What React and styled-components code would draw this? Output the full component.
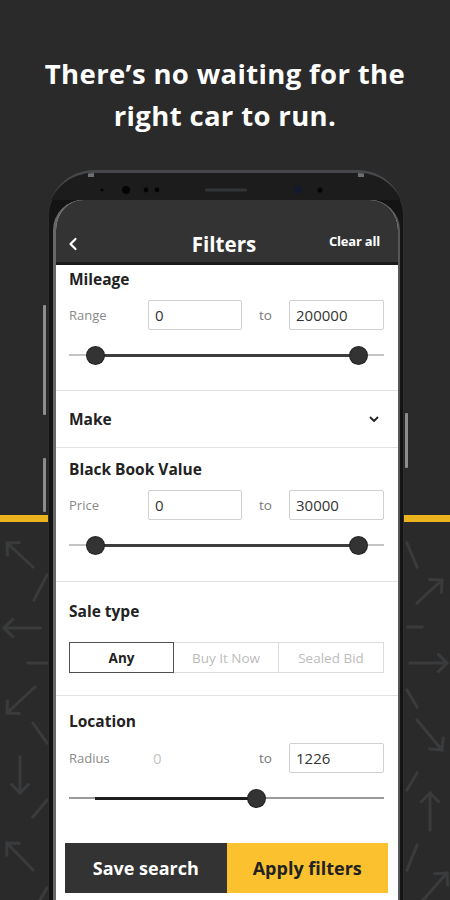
import React from 'react'
import styled, { createGlobalStyle } from 'styled-components'

const GlobalStyle = createGlobalStyle`
  html, body {
    margin: 0;
    padding: 0;
    background: #2a2a2b;
  }
  body {
    font-family: "Open Sans", Lato, "Liberation Sans", sans-serif;
    -webkit-font-smoothing: antialiased;
  }
`

const ARROW_COLOR = '#3a3b3c'

// path for an arrow going from tail to tip
function arrowPath(x1, y1, x2, y2, head = 12) {
    const dx = x2 - x1
    const dy = y2 - y1
    const len = Math.sqrt(dx * dx + dy * dy)
    const ux = -dx / len
    const uy = -dy / len
    const c = Math.cos(Math.PI / 4)
    const s = Math.sin(Math.PI / 4)
    const ax = x2 + head * (ux * c - uy * s)
    const ay = y2 + head * (ux * s + uy * c)
    const bx = x2 + head * (ux * c + uy * s)
    const by = y2 + head * (-ux * s + uy * c)
    return `M${x1} ${y1}L${x2} ${y2}M${ax} ${ay}L${x2} ${y2}L${bx} ${by}`
}

const leftArrows = [
    [33, 397, 7, 373],
    [40, 458, 4, 458],
    [35, 517, 7, 543],
    [20, 587, 20, 623],
    [33, 700, 7, 673],
]
const leftBits = [
    [47, 405, 34, 430],
    [28, 493, 47, 493],
    [33, 553, 47, 573],
    [33, 647, 47, 630],
    [40, 730, 47, 718],
]
const rightArrows = [
    [13, 433, 38, 410],
    [6, 493, 43, 493],
    [13, 550, 38, 580],
    [26, 660, 26, 623],
    [19, 730, 43, 703],
]
const rightBits = [
    [3, 373, 13, 397],
    [4, 457, 18, 457],
    [3, 520, 13, 537],
    [3, 620, 13, 603],
    [3, 700, 13, 675],
]

function SideArt({ arrows, bits, buttons, width }) {
    return (
        <svg width={width} height="730" viewBox={`0 0 ${width} 730`}>
            <g stroke={ARROW_COLOR} strokeWidth="3" fill="none" strokeLinecap="square">
                {arrows.map((a, i) => <path key={i} d={arrowPath(...a)} />)}
                {bits.map((b, i) => <line key={'b' + i} x1={b[0]} y1={b[1]} x2={b[2]} y2={b[3]} />)}
            </g>
            {buttons.map((b, i) => (
                <rect key={'k' + i} x={b[0]} y={b[1]} width="3" height={b[2]} rx="1" fill="#8d8d8f" />
            ))}
        </svg>
    )
}

function RangeSlider({ min, max, low, high, showLow = true, dark }) {
    const a = ((low - min) / (max - min)) * 100
    const b = ((high - min) / (max - min)) * 100
    return (
        <SliderTrack $dark={dark}>
            <Rail>
                <Fill $dark={dark} style={{ left: `${a}%`, width: `${b - a}%` }} />
                {showLow && <Thumb style={{ left: `${a}%` }} />}
                <Thumb style={{ left: `${b}%` }} />
            </Rail>
        </SliderTrack>
    )
}

function App() {
    return (
        <Page>
            <GlobalStyle />
            <Headline>
                There’s no waiting for the
                <br />
                right car to run.
            </Headline>
            <Stage>
                <Side $w={48}>
                    <SideArt width={48} arrows={leftArrows} bits={leftBits} buttons={[[43, 135, 110], [43, 288, 54]]} />
                </Side>
                <Phone>
                    <Bezel>
                        <svg width="356" height="27" viewBox="0 0 356 27">
                            <rect x="40" y="0" width="6" height="4" fill="#6d6f75" />
                            <rect x="310" y="0" width="6" height="4" fill="#6d6f75" />
                            <circle cx="54" cy="17" r="1.6" fill="#050505" />
                            <circle cx="78" cy="17" r="4" fill="#050505" />
                            <circle cx="98" cy="17" r="2.4" fill="#050505" />
                            <circle cx="109" cy="17" r="2.4" fill="#050505" />
                            <rect x="157" y="15.5" width="42" height="3" rx="1.5" fill="#333437" />
                            <circle cx="250" cy="17" r="4" fill="#141a2c" />
                            <circle cx="272" cy="17" r="2.6" fill="#050505" />
                        </svg>
                    </Bezel>
                    <Glass>
                        <Header>
                            <BackButton>
                                <svg width="10" height="14" viewBox="0 0 10 14">
                                    <path d="M7.5 2L2.5 7l5 5" stroke="#fff" strokeWidth="2.2" fill="none" strokeLinecap="round" strokeLinejoin="round" />
                                </svg>
                            </BackButton>
                            <HeaderTitle>Filters</HeaderTitle>
                            <ClearAll>Clear all</ClearAll>
                        </Header>

                        <Section $pt={5} $pb={26}>
                            <SectionTitle>Mileage</SectionTitle>
                            <FieldRow $mt={12}>
                                <FieldLabel>Range</FieldLabel>
                                <Field>0</Field>
                                <To>to</To>
                                <Field>200000</Field>
                            </FieldRow>
                            <SliderBox>
                                <RangeSlider min={0} max={200000} low={0} high={200000} />
                            </SliderBox>
                        </Section>

                        <MakeRow>
                            <SectionTitle>Make</SectionTitle>
                            <svg width="10" height="7" viewBox="0 0 10 7">
                                <path d="M1.5 1.5L5 5l3.5-3.5" stroke="#222" strokeWidth="1.8" fill="none" strokeLinecap="round" strokeLinejoin="round" />
                            </svg>
                        </MakeRow>

                        <Section $pt={12} $pb={27}>
                            <SectionTitle>Black Book Value</SectionTitle>
                            <FieldRow $mt={12}>
                                <FieldLabel>Price</FieldLabel>
                                <Field>0</Field>
                                <To>to</To>
                                <Field>30000</Field>
                            </FieldRow>
                            <SliderBox>
                                <RangeSlider min={0} max={30000} low={0} high={30000} />
                            </SliderBox>
                        </Section>

                        <Section $pt={20} $pb={22}>
                            <SectionTitle>Sale type</SectionTitle>
                            <Segments>
                                <Segment $active>Any</Segment>
                                <Segment>Buy It Now</Segment>
                                <Segment>Sealed Bid</Segment>
                            </Segments>
                        </Section>

                        <Section $pt={16} $pb={0} $last>
                            <SectionTitle>Location</SectionTitle>
                            <FieldRow $mt={13}>
                                <FieldLabel>Radius</FieldLabel>
                                <Placeholder>0</Placeholder>
                                <To>to</To>
                                <Field>1226</Field>
                            </FieldRow>
                            <SliderBox>
                                <RangeSlider min={0} max={2000} low={0} high={1226} showLow={false} dark />
                            </SliderBox>
                        </Section>

                        <ActionBar>
                            <ActionButton>Save search</ActionButton>
                            <ActionButton $primary>Apply filters</ActionButton>
                        </ActionBar>
                    </Glass>
                </Phone>
                <Side $w={46}>
                    <SideArt width={46} arrows={rightArrows} bits={rightBits} buttons={[[1, 243, 55]]} />
                </Side>
            </Stage>
        </Page>
    )
}

const Page = styled.div`
  width: 450px;
  height: 900px;
  overflow: hidden;
  background: #2a2a2b;
`

const Headline = styled.h1`
  margin: 0;
  padding-top: 53px;
  font-size: 27.5px;
  line-height: 42px;
  font-weight: 700;
  color: #ffffff;
  text-align: center;
  letter-spacing: 0.35px;
`

const Stage = styled.div`
  margin-top: 33px;
  height: 730px;
  display: flex;
  overflow: hidden;
  background: linear-gradient(
    to bottom,
    transparent 345px,
    #ebb31d 345px,
    #ebb31d 352px,
    transparent 352px
  );
`

const Side = styled.div`
  width: ${p => p.$w}px;
  flex-shrink: 0;
  svg {
    display: block;
  }
`

const Phone = styled.div`
  width: 356px;
  flex-shrink: 0;
  background: #141414;
  border-top: 3px solid #46474b;
  border-radius: 46px 46px 0 0;
  overflow: hidden;
  box-shadow: inset 1px 0 0 #2d2d2d, inset -1px 0 0 #2d2d2d;
  box-sizing: border-box;
  padding: 0 4px 0 5px;
`

const Bezel = styled.div`
  height: 27px;
  margin: 0 -4px 0 -5px;
  background: #1c1c1d;
  svg {
    display: block;
  }
`

const Glass = styled.div`
  background: #ffffff;
  border-left: 3px solid #66676a;
  border-right: 2px solid #55565a;
  border-radius: 30px 30px 0 0;
  overflow: hidden;
  height: 720px;
`

const Header = styled.div`
  height: 65px;
  box-sizing: border-box;
  background: #333334;
  border-bottom: 3px solid #1b1b1c;
  display: grid;
  grid-template-columns: 1fr auto 1fr;
  align-items: end;
  padding: 0 18px 6px 12px;
`

const BackButton = styled.div`
  display: flex;
  align-items: center;
  height: 24px;
  svg {
    display: block;
  }
`

const HeaderTitle = styled.div`
  color: #fff;
  font-size: 20.5px;
  font-weight: 700;
  line-height: 24px;
`

const ClearAll = styled.div`
  justify-self: end;
  color: #fff;
  font-size: 13px;
  font-weight: 700;
  line-height: 24px;
  padding-bottom: 3px;
  letter-spacing: -0.2px;
`

const Section = styled.div`
  padding: ${p => p.$pt}px 14px ${p => p.$pb}px 13px;
  border-bottom: ${p => (p.$last ? 'none' : '1px solid #e2e2e2')};
`

const SectionTitle = styled.div`
  font-size: 15.5px;
  font-weight: 700;
  line-height: 18px;
  color: #222;
`

const FieldRow = styled.div`
  margin-top: ${p => p.$mt}px;
  display: grid;
  grid-template-columns: 79px 94px 47px 95px;
  align-items: center;
  height: 30px;
`

const FieldLabel = styled.div`
  font-size: 13px;
  color: #8a8a8a;
`

const Field = styled.div`
  height: 30px;
  box-sizing: border-box;
  border: 1px solid #d0d0d0;
  border-radius: 2px;
  padding: 0 6px;
  display: flex;
  align-items: center;
  font-size: 15px;
  color: #333;
`

const Placeholder = styled.div`
  padding-left: 5px;
  font-size: 15px;
  color: #c4c4c4;
`

const To = styled.div`
  text-align: center;
  font-size: 13.5px;
  color: #777;
`

const SliderBox = styled.div`
  margin-top: 16px;
`

const SliderTrack = styled.div`
  height: 18px;
  padding: 0 26px;
  background: linear-gradient(
    to bottom,
    transparent 8px,
    ${p => (p.$dark ? '#9a9a9a' : '#c4c4c4')} 8px,
    ${p => (p.$dark ? '#9a9a9a' : '#c4c4c4')} 10px,
    transparent 10px
  );
`

const Rail = styled.div`
  position: relative;
  height: 18px;
`

const Fill = styled.div`
  position: absolute;
  top: 7.5px;
  height: 3px;
  background: ${p => (p.$dark ? '#1e1e1e' : '#3d3d3d')};
`

const Thumb = styled.div`
  position: absolute;
  top: 0.5px;
  width: 17px;
  height: 17px;
  margin-left: -8.5px;
  border-radius: 50%;
  background: #333;
  box-shadow: 0 0 0 1px #222;
`

const MakeRow = styled.div`
  height: 56px;
  padding: 0 19px 0 13px;
  display: flex;
  align-items: center;
  justify-content: space-between;
  border-bottom: 1px solid #e2e2e2;
  svg {
    display: block;
  }
`

const Segments = styled.div`
  margin-top: 22px;
  display: grid;
  grid-template-columns: repeat(3, 1fr);
  height: 31px;
`

const Segment = styled.div`
  display: flex;
  align-items: center;
  justify-content: center;
  font-size: 13.5px;
  font-weight: ${p => (p.$active ? 700 : 400)};
  color: ${p => (p.$active ? '#222' : '#bcbcbc')};
  border: ${p => (p.$active ? '1.5px solid #505050' : '1px solid #dcdcdc')};
  margin-left: ${p => (p.$active ? '0' : '-1px')};
  position: relative;
  z-index: ${p => (p.$active ? 1 : 0)};
`

const ActionBar = styled.div`
  margin: 36px 10px 0 9px;
  display: grid;
  grid-template-columns: 1fr 1fr;
  height: 50px;
`

const ActionButton = styled.div`
  display: flex;
  align-items: center;
  justify-content: center;
  font-size: 18px;
  font-weight: 700;
  background: ${p => (p.$primary ? '#fbc12e' : '#333334')};
  color: ${p => (p.$primary ? '#222' : '#fff')};
`

export default App
